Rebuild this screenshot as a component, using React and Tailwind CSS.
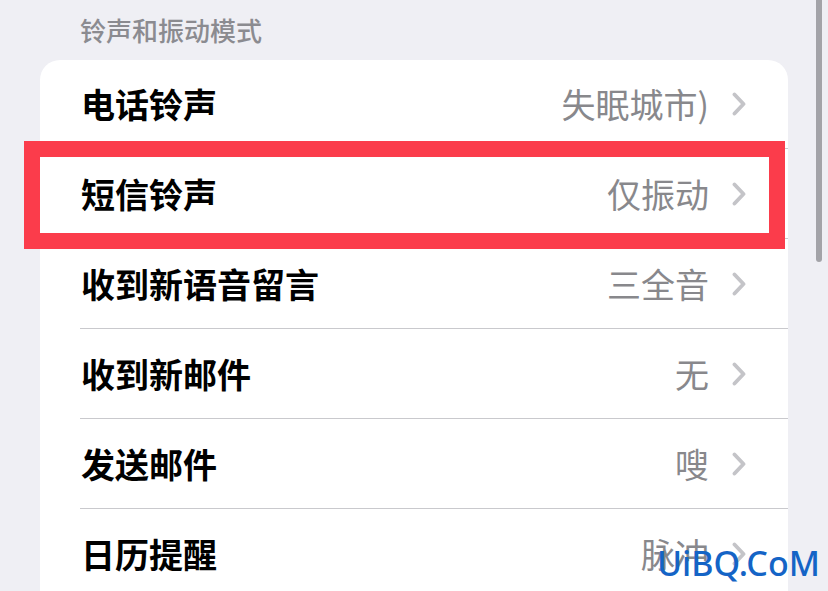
const rows = [
  { title: '电话铃声', value: '失眠城市)' },
  { title: '短信铃声', value: '仅振动' },
  { title: '收到新语音留言', value: '三全音' },
  { title: '收到新邮件', value: '无' },
  { title: '发送邮件', value: '嗖' },
  { title: '日历提醒', value: '脉冲' },
];

const Chevron = () => (
  <svg width="14" height="24" viewBox="0 0 14 24" fill="none" className="shrink-0">
    <polyline
      points="2.5,2.5 11.5,12 2.5,21.5"
      stroke="#c4c4c8"
      strokeWidth="3.8"
      strokeLinecap="round"
      strokeLinejoin="round"
    />
  </svg>
);

const App = () => {
  return (
    <div
      className="relative h-[591px] w-[828px] overflow-hidden bg-[#efeff4]"
      style={{ fontFamily: '"Noto Sans CJK SC", "Noto Sans", sans-serif' }}
    >
      {/* Section header */}
      <div className="h-[60px] pl-[80px] pt-[15px]">
        <p className="text-[26px] font-medium leading-[30px] text-[#8b8b90]">铃声和振动模式</p>
      </div>

      {/* Card */}
      <div className="ml-[40px] w-[748px] rounded-t-[20px] bg-white">
        {rows.map((row, i) => (
          <div
            key={row.title}
            className={
              i === 0
                ? 'ml-[40px] flex h-[88px] items-center justify-between pl-[1px] pr-[42px]'
                : 'ml-[40px] flex h-[90px] items-center justify-between border-t border-[#c9c9cd] pl-[1px] pr-[42px]'
            }
          >
            <span className="text-[34px] font-semibold leading-none text-black">{row.title}</span>
            <div className="flex items-center gap-[23px]">
              <span className="text-[34px] leading-none text-[#88888c]">{row.value}</span>
              <Chevron />
            </div>
          </div>
        ))}
      </div>

      {/* Scroll indicator */}
      <div className="absolute left-[816px] top-[-10px] h-[272px] w-[6px] rounded-full bg-[#a3a3a8]" />

      {/* Highlight box */}
      <div className="absolute left-[24px] top-[141px] h-[108px] w-[761px] border-[16px] border-[#fb3c4b]" />

      {/* Watermark */}
      <div
        className="absolute left-[657px] top-[546px] text-[34px] font-medium leading-none text-[#1464c6]"
        style={{ fontFamily: '"Noto Sans", sans-serif' }}
      >
        UiBQ.CoM
      </div>
    </div>
  );
};

export default App;
